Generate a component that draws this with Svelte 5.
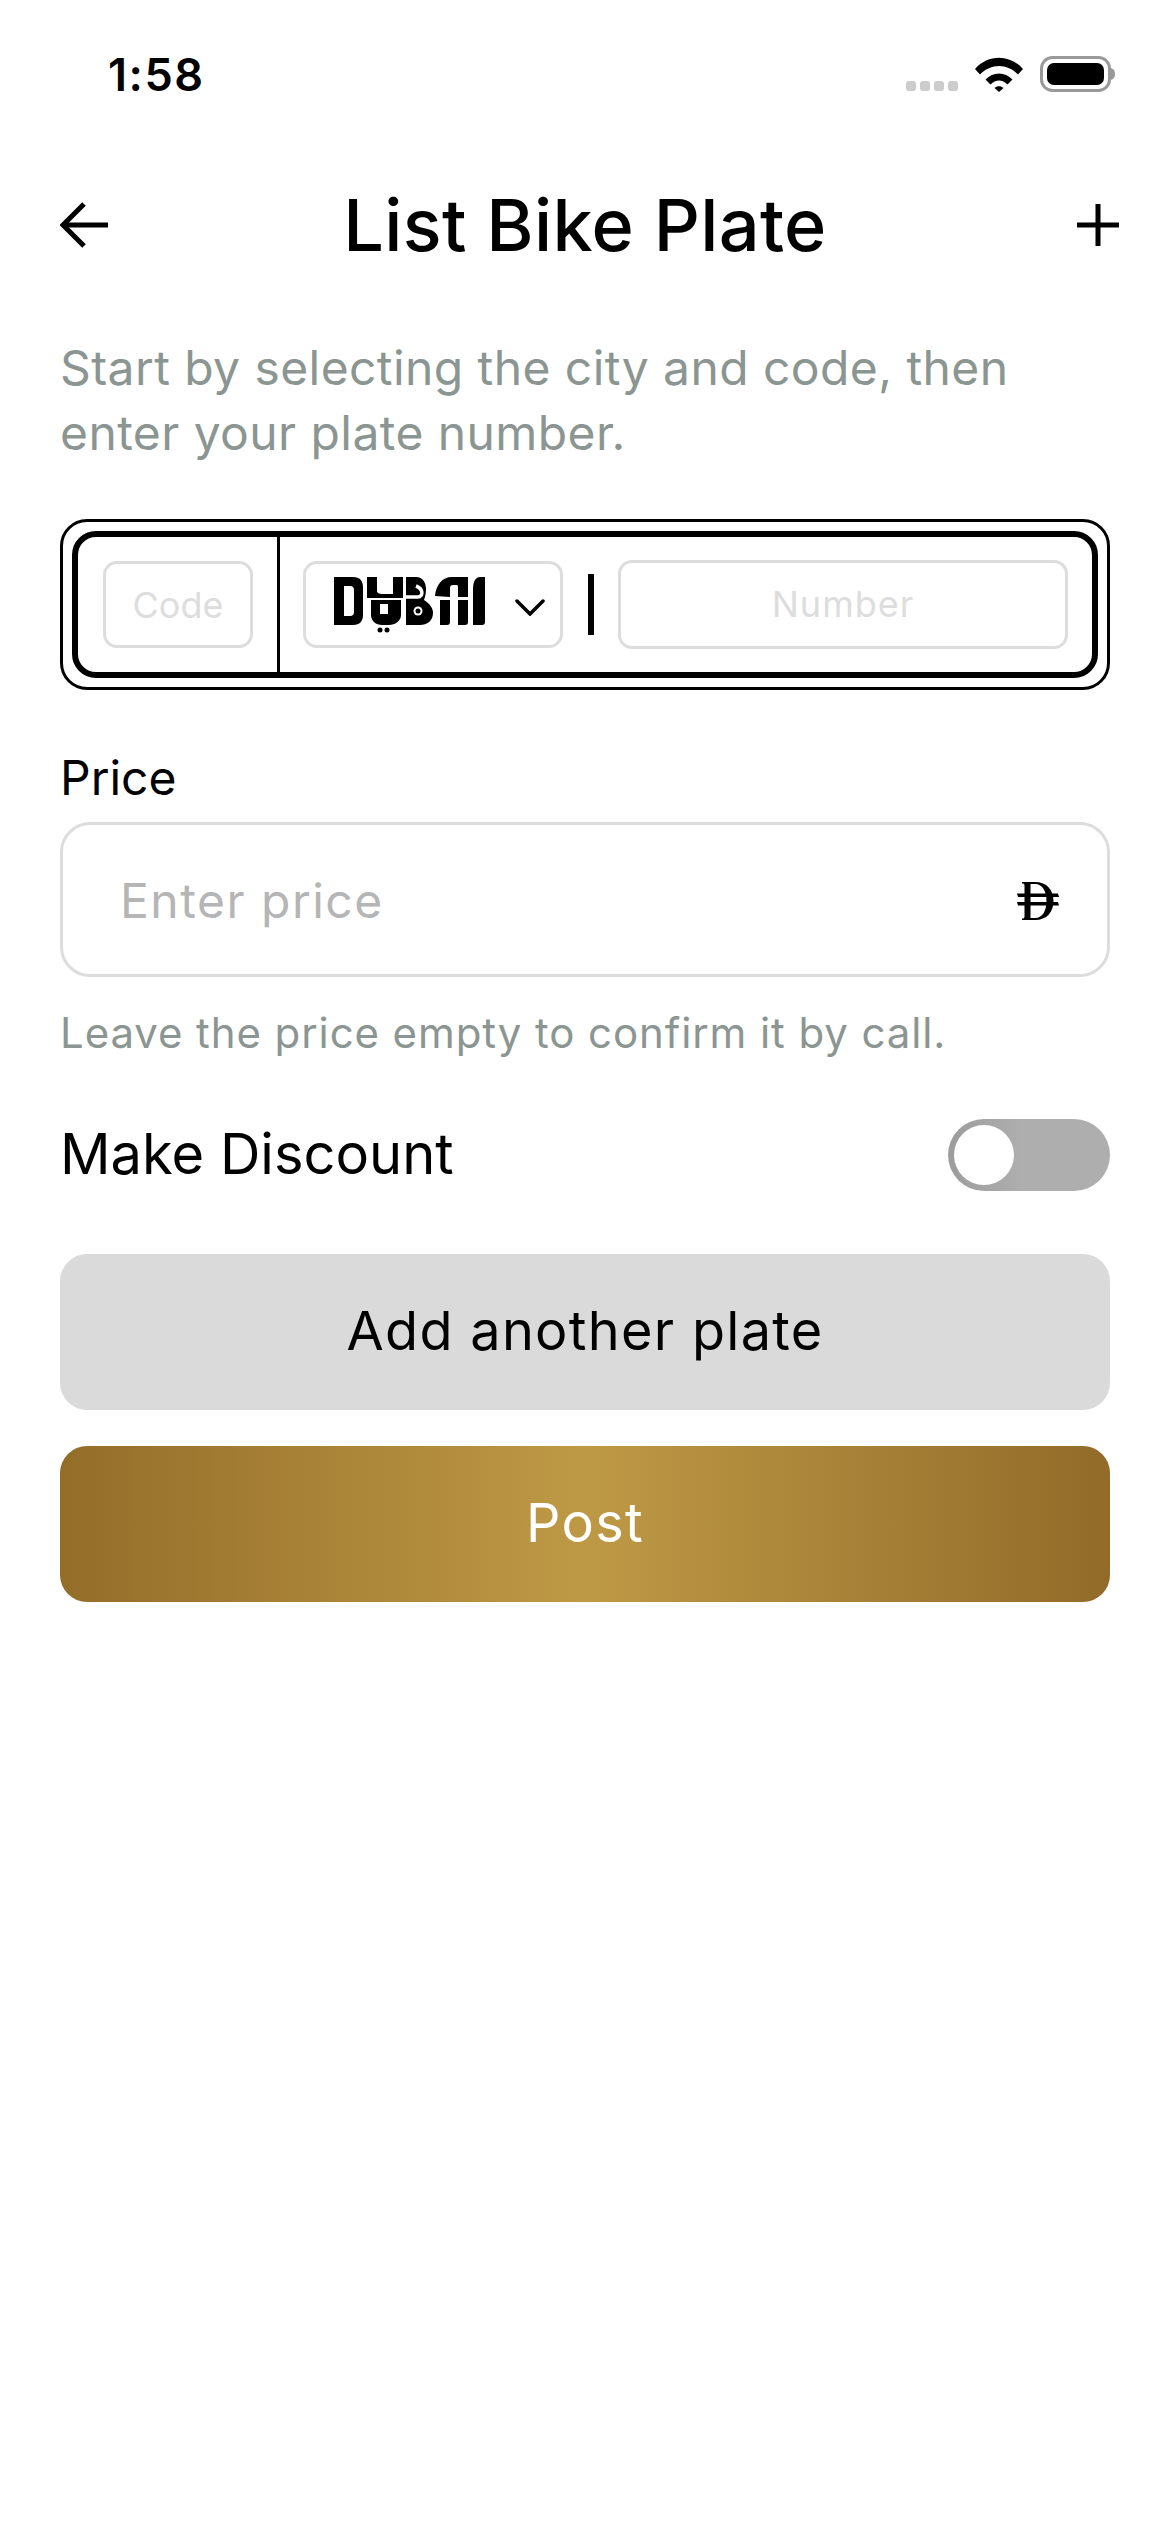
<script>
  let discount = $state(false);
  let price = $state("");
  let code = $state("");
  let number = $state("");
</script>

<div class="page">
  <div class="status">
    <span class="time">1:58</span>
    <div class="status-icons">
      <div class="dots"><i></i><i></i><i></i><i></i></div>
      <svg class="wifi" width="48" height="36" viewBox="0 0 48 36">
        <path d="M0 13C13-2 35-2 48 13L43 18.500C32 7 16 7 5 18.500Z" fill="#000" />
        <path d="M10.500 23.500C18 15.500 30 15.500 37.500 23.500L32.500 28.500C27 23 21 23 15.500 28.500Z" fill="#000" />
        <path d="M19.500 32C22 29.500 26 29.500 28.500 32L24 36Z" fill="#000" />
      </svg>
      <svg class="battery" width="75" height="36" viewBox="0 0 75 36">
        <rect x="1.500" y="1.500" width="68" height="33" rx="11" fill="none" stroke="#999" stroke-width="3" />
        <rect x="7" y="7" width="57" height="22" rx="7" fill="#000" />
        <path d="M71 12C74 13 75 15 75 18C75 21 74 23 71 24Z" fill="#999" />
      </svg>
    </div>
  </div>

  <div class="nav">
    <svg width="48" height="46" viewBox="0 0 48 46" fill="none" stroke="#000" stroke-width="5">
      <path d="M48 23H4" />
      <path d="M24 2L3 23L24 44" />
    </svg>
    <h1>List Bike Plate</h1>
    <svg class="plus" width="42" height="42" viewBox="0 0 42 42" fill="none" stroke="#000" stroke-width="5">
      <path d="M21 0V42M0 21H42" />
    </svg>
  </div>

  <main>
    <p class="intro">Start by selecting the city and code, then enter your plate number.</p>

    <div class="plate-outer">
      <div class="plate">
        <div class="code-cell">
          <input class="code" placeholder="Code" bind:value={code} />
        </div>
        <button class="city">
          <svg class="logo" width="152" height="56" viewBox="0 0 152 56" fill="#000">
            <!-- D -->
            <path fill-rule="evenodd" d="M0 0H19C26 0 29 4 29 10V38C29 44 26 48 19 48H0ZM10 9V39H16C19 39 20 37 20 35V13C20 11 19 9 16 9Z" />
            <!-- U -->
            <path d="M33 0H43V14C43 16 45 17 48 17H59V0H69V21H33Z" />
            <path fill-rule="evenodd" d="M37 23H67V38C67 44 61 48 55 48H48C42 48 37 44 37 38ZM46 27V37H54V27Z" />
            <circle cx="46" cy="53" r="2.500" />
            <circle cx="53" cy="53" r="2.500" />
            <!-- B -->
            <path d="M72 0H82C89 0 92 6 92 12C92 17 91 20 90 23C96 27 99 31 99 36C99 44 93 48 86 48H72Z" />
            <path d="M70 20H84C89 20 90 12 82 9" fill="none" stroke="#fff" stroke-width="3.500" />
            <circle cx="84" cy="34" r="4.500" fill="#fff" />
            <circle cx="84" cy="34" r="2.500" />
            <!-- A -->
            <path d="M101 19C102 8 108 0 118 0H134V20H124V10C124 8 123 8 121 8H119C117 8 116 9 116 11V20Z" />
            <path d="M106 23H116V45C116 47 115 48 113 48H106Z" />
            <path d="M124 23H134V45C134 47 133 48 131 48H124Z" />
            <!-- I -->
            <path d="M139 12C139 4 142 0 146 0H151V45C151 47 150 48 148 48H139Z" />
          </svg>
          <svg class="chevron" width="30" height="17" viewBox="0 0 30 17" fill="none" stroke="#000" stroke-width="3.500" stroke-linecap="round">
            <path d="M2 2L15 15L28 2" />
          </svg>
        </button>
        <span class="bar"></span>
        <input class="number" placeholder="Number" bind:value={number} />
      </div>
    </div>

    <label class="field-label" for="price">Price</label>
    <div class="price-box">
      <input id="price" placeholder="Enter price" bind:value={price} />
      <svg class="dirham" width="42" height="38" viewBox="0 0 42 38" fill="#000">
        <path fill-rule="evenodd" d="M5 0H18C30 0 36.500 8 36.500 19C36.500 30 30 38 18 38H5V36.500C7 36.500 7.500 36 7.500 34V4C7.500 2 7 1.500 5 1.500ZM13.500 2V36H18C26 36 29.500 28 29.500 19C29.500 10 26 2 18 2Z" />
        <path d="M0 11.500H41L42 15H1ZM0 20H41L42 23.500H1Z" />
      </svg>
    </div>
    <p class="hint">Leave the price empty to confirm it by call.</p>

    <div class="discount">
      <span>Make Discount</span>
      <button class="toggle" class:on={discount} aria-label="Make Discount" onclick={() => (discount = !discount)}>
        <span class="knob"></span>
      </button>
    </div>

    <button class="btn add">Add another plate</button>
    <button class="btn post">Post</button>
  </main>
</div>

<style>
  :global(body) {
    background: #fff;
  }

  .page {
    height: 2532px;
    background: #fff;
    color: #000;
    font-family: Inter, "Liberation Sans", sans-serif;
  }

  .status {
    height: 148px;
    display: flex;
    justify-content: space-between;
    align-items: center;
    padding: 0 55px 0 108px;
  }

  .time {
    font-size: 45px;
    font-weight: 600;
    letter-spacing: 1.5px;
  }

  .status-icons {
    display: flex;
    align-items: flex-end;
  }

  .dots {
    display: flex;
    gap: 4px;
    margin: 0 17px 1px 0;
  }

  .dots i {
    width: 10px;
    height: 10px;
    border-radius: 3px;
    background: #ccc;
  }

  .battery {
    margin-left: 17px;
  }

  .nav {
    height: 72px;
    margin-top: 41px;
    padding: 0 60px;
    display: grid;
    grid-template-columns: 1fr auto 1fr;
    align-items: center;
  }

  .plus {
    justify-self: end;
    margin-right: -9px;
  }

  h1 {
    margin: 0;
    font-size: 72px;
    line-height: 72px;
    font-weight: 500;
    letter-spacing: 0.35px;
  }

  main {
    padding: 0 60px;
  }

  .intro {
    margin: 74px 0 54px;
    font-size: 48px;
    line-height: 65px;
    color: #8b9592;
    letter-spacing: 0.42px;
  }

  .plate-outer {
    height: 171px;
    box-sizing: border-box;
    border: 3px solid #000;
    border-radius: 27px;
    padding: 9px;
  }

  .plate {
    height: 100%;
    box-sizing: border-box;
    border: 6px solid #000;
    border-radius: 24px;
    display: flex;
    align-items: center;
  }

  .code-cell {
    width: 202px;
    height: 100%;
    flex: none;
    box-sizing: border-box;
    border-right: 3px solid #000;
    display: flex;
    align-items: center;
    padding-left: 25px;
  }

  input {
    font-family: inherit;
    outline: none;
    background: none;
    color: #000;
  }

  .code,
  .number {
    box-sizing: border-box;
    border: 3px solid #ddd;
    border-radius: 14px;
    font-size: 36px;
    text-align: center;
    padding: 0;
  }

  .code {
    width: 150px;
    height: 87px;
  }

  .number {
    width: 450px;
    height: 89px;
    margin-left: 24px;
    padding-bottom: 2px;
    letter-spacing: 1px;
  }

  .code::placeholder,
  .number::placeholder {
    color: #ddd;
  }

  .city {
    width: 260px;
    height: 87px;
    flex: none;
    box-sizing: border-box;
    margin-left: 23px;
    padding: 13px 15px 0 28px;
    border: 3px solid #ddd;
    border-radius: 14px;
    background: none;
    display: flex;
    align-items: flex-start;
    justify-content: space-between;
  }

  .chevron {
    margin-top: 22px;
  }

  .bar {
    width: 6px;
    height: 61px;
    margin-left: 25px;
    background: #000;
  }

  .field-label {
    display: block;
    margin-top: 59px;
    font-size: 48px;
    line-height: 58px;
  }

  .price-box {
    height: 155px;
    margin-top: 15px;
    box-sizing: border-box;
    border: 3px solid #ddd;
    border-radius: 30px;
    padding: 0 48px 0 57px;
    display: flex;
    align-items: center;
    justify-content: space-between;
  }

  .price-box input {
    flex: 1;
    min-width: 0;
    border: 0;
    padding: 2px 0 0;
    font-size: 48px;
    letter-spacing: 1.5px;
  }

  .price-box input::placeholder {
    color: #b5b5b5;
  }

  .dirham {
    margin-top: 3px;
  }

  .hint {
    margin: 27px 0 0;
    font-size: 42px;
    line-height: 58px;
    color: #8b9592;
    letter-spacing: 0.9px;
  }

  .discount {
    margin-top: 57px;
    display: flex;
    justify-content: space-between;
    align-items: center;
    font-size: 56px;
  }

  .discount span:first-child {
    margin-bottom: 3px;
  }

  .toggle {
    width: 162px;
    height: 72px;
    box-sizing: border-box;
    padding: 6px;
    border: 0;
    border-radius: 36px;
    background: linear-gradient(90deg, #9c9c9c, #aeaeae 45%);
    display: flex;
  }

  .toggle.on {
    justify-content: flex-end;
  }

  .knob {
    width: 60px;
    height: 60px;
    border-radius: 50%;
    background: #fff;
  }

  .btn {
    display: flex;
    width: 100%;
    height: 156px;
    padding: 0 0 3px;
    align-items: center;
    justify-content: center;
    border: 0;
    border-radius: 27px;
    font-family: inherit;
    font-size: 54px;
    letter-spacing: 1.3px;
  }

  .add {
    margin-top: 63px;
    background: #dadada;
    color: #000;
  }

  .post {
    margin-top: 36px;
    background: linear-gradient(90deg, #946d29, #be9945 50%, #926b29);
    color: #fff;
  }
</style>
